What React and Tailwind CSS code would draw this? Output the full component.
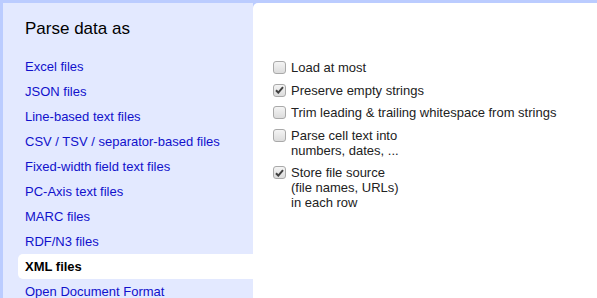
import React from "react";

const formats = [
  "Excel files",
  "JSON files",
  "Line-based text files",
  "CSV / TSV / separator-based files",
  "Fixed-width field text files",
  "PC-Axis text files",
  "MARC files",
  "RDF/N3 files",
  "XML files",
  "Open Document Format",
];

const options = [
  { label: ["Load at most"], checked: false },
  { label: ["Preserve empty strings"], checked: true },
  { label: ["Trim leading & trailing whitespace from strings"], checked: false },
  { label: ["Parse cell text into", "numbers, dates, ..."], checked: false },
  { label: ["Store file source", "(file names, URLs)", "in each row"], checked: true },
];

const Box = ({ checked }) => (
  <div className="mt-[1px] w-[13px] h-[13px] shrink-0 rounded-[3px] border border-[#a9a9a9] bg-gradient-to-b from-[#f4f4f4] to-[#dcdcdc] flex items-center justify-center">
    {checked && (
      <svg width="9" height="8" viewBox="0 0 9 8">
        <path d="M1 4.2 L3.3 6.6 L8 1.2" fill="none" stroke="#404040" strokeWidth="2" />
      </svg>
    )}
  </div>
);

export default function App() {
  return (
    <div className="w-[597px] h-[298px] overflow-hidden bg-[#bbccff] pt-[3px] pl-[3px] flex font-['Liberation_Sans',Arial,sans-serif]">
      <div className="w-[250px] shrink-0 bg-[#e3e9ff] pl-[15px]">
        <div className="pl-[7px] pt-[16px] h-[51px] text-[17px] text-black leading-[20px]">Parse data as</div>
        <div className="flex flex-col">
          {formats.map((f) =>
            f === "XML files" ? (
              <div key={f} className="h-[25px] leading-[25px] pl-[7px] bg-white rounded-l-[5px] text-[13px] font-bold text-black">
                {f}
              </div>
            ) : (
              <div key={f} className="h-[25px] leading-[25px] pl-[7px] text-[13px] text-[#1111cc]">
                {f}
              </div>
            )
          )}
        </div>
      </div>
      <div className="flex-1 bg-white rounded-tl-[5px] pl-[20px] pt-[57px]">
        <div className="flex flex-col gap-[7.5px]">
          {options.map((o, i) => (
            <div key={i} className="flex gap-[5px] text-[13px] leading-[15px] text-[#222]">
              <Box checked={o.checked} />
              <div>
                {o.label.map((l) => (
                  <div key={l}>{l}</div>
                ))}
              </div>
            </div>
          ))}
        </div>
      </div>
    </div>
  );
}
